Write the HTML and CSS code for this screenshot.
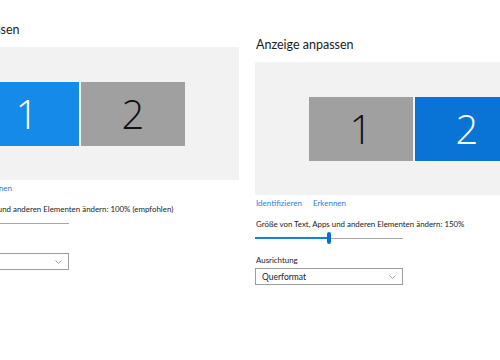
FILE: index.html
```html
<!DOCTYPE html>
<html lang="de">
<head>
    <meta charset="UTF-8">
    <title>Anzeige anpassen</title>
    <link rel="stylesheet" href="styles.css">
</head>
<body>
    <div class="screen">
        <!-- Anzeige 1, 100% -->
        <section class="panel panel-left">
            <h2>Anzeige anpassen</h2>
            <div class="preview">
                <div class="monitor monitor-active">1</div>
                <div class="monitor">2</div>
            </div>
            <div class="links">
                <a href="#">Identifizieren</a>
                <a href="#">Erkennen</a>
            </div>
            <p class="label">Größe von Text, Apps und anderen Elementen ändern: 100% (empfohlen)</p>
            <div class="slider">
                <span class="fill" style="width: 0px"></span>
                <span class="thumb"></span>
                <span class="rest"></span>
            </div>
            <p class="label">Ausrichtung</p>
            <div class="select">
                <span>Querformat</span>
                <svg width="7" height="4" viewBox="0 0 7 4"><path d="M0.5 0.5 L3.5 3.5 L6.5 0.5" fill="none" stroke="#9a9a9a" stroke-width="0.9"/></svg>
            </div>
        </section>

        <!-- Anzeige 2, 150% -->
        <section class="panel panel-right">
            <h2>Anzeige anpassen</h2>
            <div class="preview">
                <div class="monitor">1</div>
                <div class="monitor monitor-active monitor-dark">2</div>
            </div>
            <div class="links">
                <a href="#">Identifizieren</a>
                <a href="#">Erkennen</a>
            </div>
            <p class="label">Größe von Text, Apps und anderen Elementen ändern: 150%</p>
            <div class="slider">
                <span class="fill" style="width: 72px"></span>
                <span class="thumb"></span>
                <span class="rest"></span>
            </div>
            <p class="label">Ausrichtung</p>
            <div class="select">
                <span>Querformat</span>
                <svg width="7" height="4" viewBox="0 0 7 4"><path d="M0.5 0.5 L3.5 3.5 L6.5 0.5" fill="none" stroke="#9a9a9a" stroke-width="0.9"/></svg>
            </div>
        </section>
    </div>
</body>
</html>
```

FILE: styles.css
```css
* {
    margin: 0;
    padding: 0;
    box-sizing: border-box;
}

body {
    background: #fff;
    color: #222;
    font-family: Lato, 'Noto Sans', sans-serif;
    width: 500px;
    height: 360px;
    overflow: hidden;
}

.screen {
    display: flex;
    align-items: flex-start;
    gap: 16px;
    margin-left: -79px;
}

.panel {
    flex: none;
    width: 318px;
}

.panel-left {
    margin-top: 22px;
}

.panel-right {
    margin-top: 37px;
}

h2 {
    font-size: 12.5px;
    font-weight: 400;
    line-height: 16px;
    margin-left: 1px;
    margin-bottom: 9px;
    color: #1a1a1a;
}

.preview {
    background: #f2f2f2;
    height: 133px;
    display: flex;
    justify-content: center;
    align-items: center;
    gap: 2px;
}

.monitor {
    width: 104px;
    height: 64px;
    background: #a0a0a0;
    color: #111;
    display: flex;
    justify-content: center;
    align-items: center;
    font-family: 'Open Sans', 'Noto Sans', sans-serif;
    font-weight: 300;
    font-size: 40px;
}

.monitor-active {
    background: #168ae8;
    color: #fff;
}

.monitor-dark {
    background: #0a74d6;
}

.links {
    display: flex;
    gap: 11px;
    margin-top: 2px;
    margin-left: 1px;
    line-height: 12px;
}

.links a {
    color: #2f7fd0;
    text-decoration: none;
    font-size: 8px;
}

.label {
    font-size: 7.9px;
    line-height: 12px;
    margin-left: 1px;
    color: #222;
}

.links + .label {
    margin-top: 9px;
}

.slider {
    width: 148px;
    height: 12px;
    margin-top: 2px;
    margin-bottom: 10px;
    display: flex;
    align-items: center;
}

.fill {
    height: 2px;
    background: #1a7fd6;
}

.thumb {
    width: 4px;
    height: 12px;
    border-radius: 2px;
    background: #0a6fd0;
}

.rest {
    flex: 1;
    height: 1px;
    background: #a8a8a8;
}

.select {
    width: 148px;
    height: 17px;
    margin-top: 2px;
    border: 1px solid #9c9c9c;
    display: flex;
    justify-content: space-between;
    align-items: center;
    padding: 0 6px 0 6px;
    font-size: 8.5px;
    color: #222;
}
```
